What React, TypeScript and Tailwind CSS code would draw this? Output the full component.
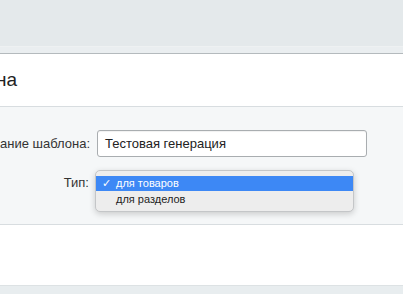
import React from 'react';

const font = { fontFamily: '"Liberation Sans", Arial, sans-serif' };

function Dropdown() {
  return (
    <div className="absolute left-[95px] top-[170px] w-[259px] rounded-[5px] border border-[#c4c6c8] bg-[#ededed] pt-[5px] pb-[4px] shadow-[0_2px_6px_rgba(0,0,0,0.18)] text-[11px] text-[#1d1d1d]">
      <div className="flex h-[15px] items-center bg-[#3d88f5] text-white">
        <span className="w-[20px] pl-[6px] text-[11px]">✓</span>
        <span>для товаров</span>
      </div>
      <div className="flex h-[16px] items-center">
        <span className="w-[20px]" />
        <span>для разделов</span>
      </div>
    </div>
  );
}

export default function App() {
  return (
    <div className="relative h-[294px] w-[403px] overflow-hidden bg-[#e6ebed]" style={font}>
      {/* top bar */}
      <div className="h-[46px] bg-[#e4e9eb]" />
      <div className="h-[7px] border-t border-[#eef1f2] bg-[#eaeef0]" />

      {/* header */}
      <div className="flex h-[53px] items-center border-t border-[#b4babd] bg-white">
        <div className="flex w-[17px] justify-end whitespace-nowrap">
          <h1 className="text-[19px] font-normal text-[#222]">Создание шаблона</h1>
        </div>
      </div>

      {/* form */}
      <div className="h-[119px] border-y border-[#d8dde0] bg-[#f5f7f8] pt-[23px]">
        <div className="flex items-center">
          <div className="flex w-[90px] justify-end whitespace-nowrap text-[13px] text-[#333]">
            Название шаблона:
          </div>
          <div className="ml-[7px] flex h-[27px] w-[270px] items-center rounded-[3px] border border-[#a9adb0] bg-white px-[7px] text-[13px] text-[#222] shadow-[inset_0_1px_1px_rgba(0,0,0,0.06)]">
            Тестовая генерация
          </div>
        </div>
        <div className="mt-[16px] flex items-center">
          <div className="flex w-[89px] justify-end whitespace-nowrap text-[13px] text-[#333]">Тип:</div>
        </div>
      </div>

      {/* footer */}
      <div className="h-[60px] bg-white" />
      <div className="h-[10px] border-t border-[#dde2e4] bg-[#e8edef]" />

      <Dropdown />
    </div>
  );
}
